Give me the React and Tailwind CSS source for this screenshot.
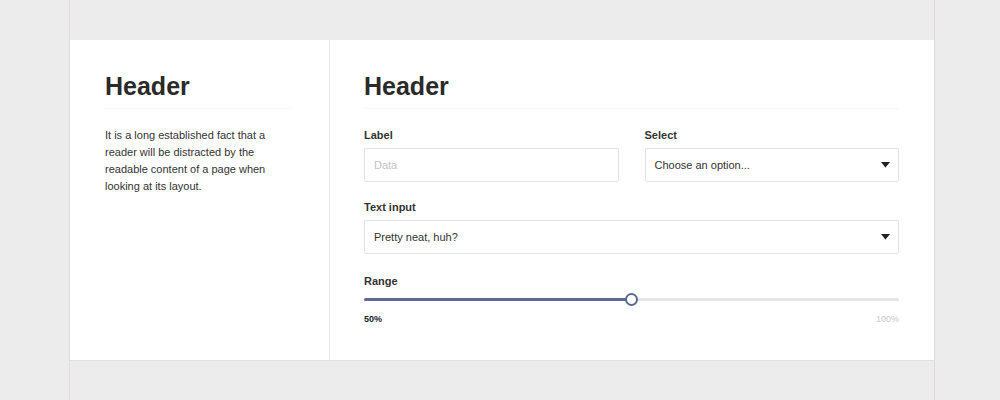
const font = { fontFamily: '"Liberation Sans", Arial, sans-serif' };

function Caret() {
  return (
    <svg width="9" height="6" viewBox="0 0 9 6" className="shrink-0">
      <path d="M0 0 H9 L4.5 5.5 Z" fill="#222" />
    </svg>
  );
}

function Field({ label, children }) {
  return (
    <div>
      <div className="text-[11px] leading-[14px] font-bold text-[#333]">{label}</div>
      <div className="mt-[6px]">{children}</div>
    </div>
  );
}

function Box({ children }) {
  return (
    <div className="h-[34px] border border-[#e2e2e2] rounded-[2px] bg-white flex items-center justify-between pl-[9px] pr-[8px] text-[11px]">
      {children}
    </div>
  );
}

export default function App() {
  return (
    <div className="w-[1000px] h-[400px] bg-[#ececec] overflow-hidden" style={font}>
      <div className="ml-[69px] w-[866px] h-[400px] border-x border-[#e6d7dc] pt-10">
        <div className="flex bg-white h-[321px] border-b border-[#e0e0e0]">
          <div className="w-[260px] border-r border-[#e5e5e5] px-[35px] pt-[31px]">
            <h1 className="text-[25px] leading-[30px] font-bold text-[#2a2a2a] pb-[7px] mr-[4px] border-b border-dotted border-[#ececec]">
              Header
            </h1>
            <p className="mt-[18px] text-[11px] leading-[17px] text-[#333] pr-[4px]">
              It is a long established fact that a reader will be distracted by the readable content of a page when looking at its layout.
            </p>
          </div>
          <div className="flex-1 pl-[34px] pr-[35px] pt-[31px]">
            <h1 className="text-[25px] leading-[30px] font-bold text-[#2a2a2a] pb-[7px] border-b border-dotted border-[#ececec]">
              Header
            </h1>
            <div className="mt-[19px] grid grid-cols-2 gap-[26px]">
              <Field label="Label">
                <Box>
                  <span className="text-[#c4c4c4]">Data</span>
                </Box>
              </Field>
              <Field label="Select">
                <Box>
                  <span className="text-[#333]">Choose an option...</span>
                  <Caret />
                </Box>
              </Field>
            </div>
            <div className="mt-[18px]">
              <Field label="Text input">
                <Box>
                  <span className="text-[#333]">Pretty neat, huh?</span>
                  <Caret />
                </Box>
              </Field>
            </div>
            <div className="mt-[20px]">
              <div className="text-[11px] leading-[14px] font-bold text-[#333]">Range</div>
              <div className="relative h-[13px] mt-[5px] flex items-center">
                <div className="w-full h-[3px] bg-[#e5e5e5] rounded-full">
                  <div className="w-1/2 h-full bg-[#5b6a93] rounded-full" />
                </div>
                <div className="absolute left-1/2 top-0 -ml-[7px] w-[13px] h-[13px] rounded-full bg-white border-[2.5px] border-[#5b6a93]" />
              </div>
              <div className="mt-[7px] flex justify-between text-[9px] leading-[12px]">
                <span className="font-bold text-[#222]">50%</span>
                <span className="text-[#c8c8c8]">100%</span>
              </div>
            </div>
          </div>
        </div>
      </div>
    </div>
  );
}
